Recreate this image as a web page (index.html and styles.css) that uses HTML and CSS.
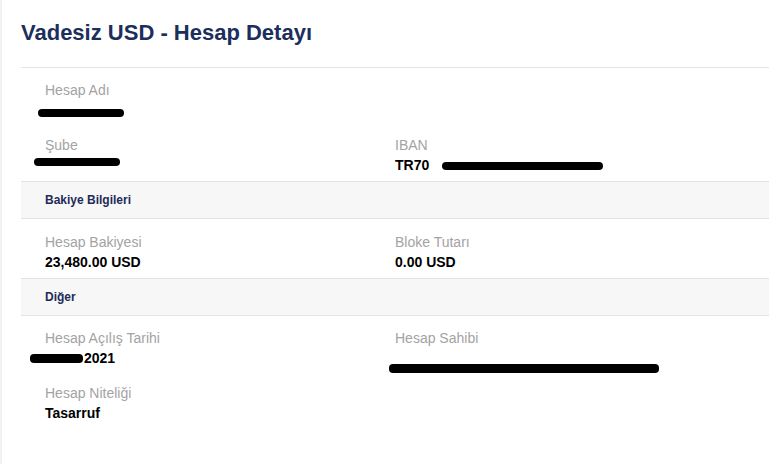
FILE: index.html
```html
<!DOCTYPE html>
<html lang="tr">
<head>
    <meta charset="UTF-8">
    <meta name="viewport" content="width=device-width, initial-scale=1.0">
    <title>Vadesiz USD - Hesap Detayı</title>
    <link rel="stylesheet" href="styles.css">
</head>
<body>

<div class="page">
    <h1 class="page-title">Vadesiz USD - Hesap Detayı</h1>

    <div class="fields">
        <div class="field">
            <div class="field-label">Hesap Adı</div>
            <div class="field-value"><span class="redact redact-name"></span></div>
        </div>
        <div class="field"></div>
        <div class="field">
            <div class="field-label">Şube</div>
            <div class="field-value"><span class="redact redact-branch"></span></div>
        </div>
        <div class="field">
            <div class="field-label">IBAN</div>
            <div class="field-value">TR70<span class="redact redact-iban"></span></div>
        </div>
    </div>

    <div class="section-title">Bakiye Bilgileri</div>
    <div class="fields fields-balance">
        <div class="field">
            <div class="field-label">Hesap Bakiyesi</div>
            <div class="field-value">23,480.00 USD</div>
        </div>
        <div class="field">
            <div class="field-label">Bloke Tutarı</div>
            <div class="field-value">0.00 USD</div>
        </div>
    </div>

    <div class="section-title">Diğer</div>
    <div class="fields">
        <div class="field">
            <div class="field-label">Hesap Açılış Tarihi</div>
            <div class="field-value"><span class="redact redact-date"></span>2021</div>
        </div>
        <div class="field">
            <div class="field-label">Hesap Sahibi</div>
            <div class="field-value"><span class="redact redact-owner"></span></div>
        </div>
        <div class="field">
            <div class="field-label">Hesap Niteliği</div>
            <div class="field-value">Tasarruf</div>
        </div>
    </div>
</div>

</body>
</html>
```

FILE: styles.css
```css
body {
    margin: 0;
    padding: 0;
    background-color: #fff;
    font-family: 'Liberation Sans', Arial, sans-serif;
    color: #000;
}
.page {
    min-height: 464px;
    box-sizing: border-box;
    border-left: 2px solid #f1f1f1;
    padding: 0 1px 0 19px;
}
.page-title {
    margin: 0;
    padding: 20px 0 21px;
    font-size: 22px;
    line-height: 26px;
    font-weight: bold;
    color: #1c2f5c;
    border-bottom: 1px solid #e3e3e3;
}
.fields {
    display: grid;
    grid-template-columns: 350px 1fr;
    row-gap: 19px;
    padding: 14px 24px 8px;
}
.fields-balance {
    padding-top: 15px;
}
.field-label {
    font-size: 14px;
    line-height: 16px;
    color: #a3a3a3;
}
.field-value {
    margin-top: 4px;
    font-size: 14px;
    line-height: 16px;
    font-weight: bold;
    min-height: 16px;
}
.section-title {
    padding: 0 24px;
    font-size: 12px;
    line-height: 36px;
    font-weight: bold;
    color: #1e2b58;
    background-color: #f7f7f7;
    border-top: 1px solid #e3e3e3;
    border-bottom: 1px solid #e3e3e3;
}

/* karalanmış alanlar */
.redact {
    display: inline-block;
    height: 8px;
    border-radius: 4px;
    background-color: #000;
}
.redact-name {
    width: 86px;
    margin-left: -7px;
    vertical-align: -2px;
}
.redact-branch {
    width: 86px;
    margin-left: -11px;
    vertical-align: 4px;
}
.redact-iban {
    width: 161px;
    margin-left: 13px;
    vertical-align: 0;
}
.redact-date {
    width: 53px;
    height: 9px;
    margin-left: -15px;
    margin-right: 1px;
    vertical-align: 0;
}
.redact-owner {
    width: 270px;
    height: 9px;
    margin-left: -6px;
    transform: translateY(10px);
}
```
